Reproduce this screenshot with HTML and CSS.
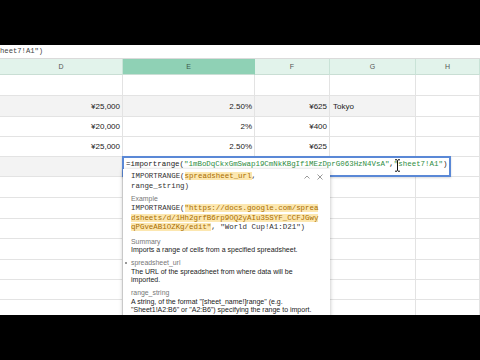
FILE: index.html
```html
<!DOCTYPE html>
<html>
<head>
<meta charset="utf-8">
<link rel="stylesheet" href="styles.css">
</head>
<body>
<div class="frame">
  <div class="letterbox"></div>
  <div class="sheet">
    <div class="fbar"><span class="fbar-text">heet7!A1")</span></div>
    <div class="grid">
      <div class="hd">D</div><div class="hd sel">E</div><div class="hd">F</div><div class="hd">G</div><div class="hd">H</div>

      <div class="c"></div><div class="c"></div><div class="c"></div><div class="c"></div><div class="c"></div>

      <div class="c band num">¥25,000</div><div class="c band num">2.50%</div><div class="c band num">¥625</div><div class="c band txt">Tokyo</div><div class="c"></div>

      <div class="c num">¥20,000</div><div class="c num">2%</div><div class="c num">¥400</div><div class="c"></div><div class="c"></div>

      <div class="c num">¥25,000</div><div class="c num">2.50%</div><div class="c num">¥625</div><div class="c"></div><div class="c"></div>

      <div class="c band"></div><div class="c band"></div><div class="c band"></div><div class="c band"></div><div class="c"></div>

      <div class="c"></div><div class="c"></div><div class="c"></div><div class="c"></div><div class="c"></div>
      <div class="c"></div><div class="c"></div><div class="c"></div><div class="c"></div><div class="c"></div>
      <div class="c"></div><div class="c"></div><div class="c"></div><div class="c"></div><div class="c"></div>
      <div class="c"></div><div class="c"></div><div class="c"></div><div class="c"></div><div class="c"></div>
      <div class="c"></div><div class="c"></div><div class="c"></div><div class="c"></div><div class="c"></div>
      <div class="c"></div><div class="c"></div><div class="c"></div><div class="c"></div><div class="c"></div>
      <div class="c"></div><div class="c"></div><div class="c"></div><div class="c"></div><div class="c"></div>
    </div>

    <div class="editor"><span class="k">=importrange(</span><span class="s">"1mBoDqCkxGmSwap19CmNkKBgIf1MEzDprG063HzN4VsA"</span><span class="k">,</span><span class="s">"sheet7!A1"</span><span class="k">)</span></div>

    <svg class="ibeam" width="7" height="13" viewBox="0 0 7 13">
      <path d="M1 0.8h2l0.5 0.5l0.5-0.5h2M3.5 1.3v10.4M1 12.2h2l0.5-0.5l0.5 0.5h2" fill="none" stroke="#111" stroke-width="1"/>
    </svg>

    <div class="tip">
      <div class="tip-head">
        <div class="mono sig">IMPORTRANGE(<span class="hl">spreadsheet_url</span>,<br>range_string)</div>
        <div class="tip-icons">
          <svg width="8" height="8" viewBox="0 0 8 8"><path d="M1.5 5.5L4 3l2.5 2.5" fill="none" stroke="#9a9a9a" stroke-width="1"/></svg>
          <svg width="8" height="8" viewBox="0 0 8 8"><path d="M1.5 1.5l5 5M6.5 1.5l-5 5" fill="none" stroke="#9a9a9a" stroke-width="1"/></svg>
        </div>
      </div>
      <div class="lbl first">Example</div>
      <div class="mono ex">IMPORTRANGE(<span class="hl">"https://docs.google.com/sprea<br>dsheets/d/1Hh2grfB6rp9OQ2yAIu35SYF_CCFJGwy<br>qPGveAB1OZKg/edit"</span>, "World Cup!A1:D21")</div>
      <div class="lbl">Summary</div>
      <div class="desc">Imports a range of cells from a specified spreadsheet.</div>
      <div class="lbl arg"><span class="bullet"></span>spreadsheet_url</div>
      <div class="desc">The URL of the spreadsheet from where data will be<br>imported.</div>
      <div class="lbl">range_string</div>
      <div class="desc">A string, of the format "[sheet_name!]range" (e.g.<br>"Sheet1!A2:B6" or "A2:B6") specifying the range to import.</div>
    </div>
  </div>
  <div class="letterbox"></div>
</div>
</body>
</html>
```

FILE: styles.css
```css
html, body {
  margin: 0;
  padding: 0;
  background: #000;
}
body {
  width: 480px;
  height: 360px;
  overflow: hidden;
  font-family: "Liberation Sans", Arial, sans-serif;
}
.frame {
  display: flex;
  flex-direction: column;
  width: 480px;
  height: 360px;
}
.letterbox {
  height: 45px;
  background: #000;
  flex: none;
}
.sheet {
  position: relative;
  height: 270px;
  background: #fff;
  overflow: hidden;
  flex: none;
}
.fbar {
  height: 13px;
  border-bottom: 1px solid #dadada;
  font-family: "Liberation Mono", monospace;
  font-size: 7.2px;
  line-height: 13px;
  color: #444;
  white-space: nowrap;
}
.fbar-text {
  display: inline-block;
}
.grid {
  display: grid;
  grid-template-columns: 123px 132px 75px 86px 64px;
  grid-template-rows: 16px 21px 21px 20px 20px 20px 21px 21px 20px 21px 20px 20px 21px;
}
.hd {
  background: #e2f3eb;
  border-right: 1px solid #c9e3d7;
  border-bottom: 1px solid #c9ded4;
  font-size: 7px;
  color: #555;
  display: flex;
  align-items: center;
  justify-content: center;
}
.hd.sel {
  background: #8fd1b5;
  border-right-color: #8fd1b5;
  color: #3c5a4d;
}
.c {
  border-right: 1px solid #e3e3e3;
  border-bottom: 1px solid #e3e3e3;
  font-size: 8px;
  color: #222;
  display: flex;
  align-items: center;
  white-space: nowrap;
}
.c.band {
  background: #f3f3f3;
}
.c.num {
  justify-content: flex-end;
  padding-right: 2px;
}
.c.txt {
  padding-left: 3px;
}
.editor {
  position: absolute;
  left: 122px;
  top: 111px;
  width: 323px;
  height: 17px;
  border: 2px solid #5a88d6;
  background: #fff;
  padding: 0 0 0 2px;
  font-family: "Liberation Mono", monospace;
  font-size: 7.45px;
  line-height: 12px;
  white-space: nowrap;
  box-shadow: 0 1px 2px rgba(0,0,0,0.15);
}
.editor .k { color: #222; }
.editor .s { color: #2e8d43; }
.ibeam {
  position: absolute;
  left: 394px;
  top: 114px;
}
.tip {
  position: absolute;
  left: 123px;
  top: 124px;
  width: 193px;
  height: 170px;
  background: #fff;
  padding: 3px 6px 0 8px;
  box-shadow: 0 1px 4px rgba(0,0,0,0.28);
  color: #222;
}
.mono {
  font-family: "Liberation Mono", monospace;
  font-size: 7.45px;
  line-height: 9.5px;
  white-space: nowrap;
  color: #333;
}
.hl {
  background: #fce7b0;
  color: #a86d00;
}
.tip-head {
  display: flex;
  justify-content: space-between;
  align-items: flex-start;
}
.tip-icons {
  display: flex;
  gap: 5px;
  padding-top: 1px;
}
.lbl {
  font-size: 6.9px;
  line-height: 8.5px;
  color: #777;
  margin-top: 5px;
}
.lbl.first {
  margin-top: 4px;
}
.ex {
  margin-top: 0.5px;
}
.desc {
  font-size: 7px;
  line-height: 8.2px;
  color: #222;
  white-space: nowrap;
}
.arg {
  display: flex;
  align-items: center;
  margin-left: -6px;
}
.bullet {
  width: 2px;
  height: 2px;
  border-radius: 1px;
  background: #777;
  margin-right: 4px;
}
```
